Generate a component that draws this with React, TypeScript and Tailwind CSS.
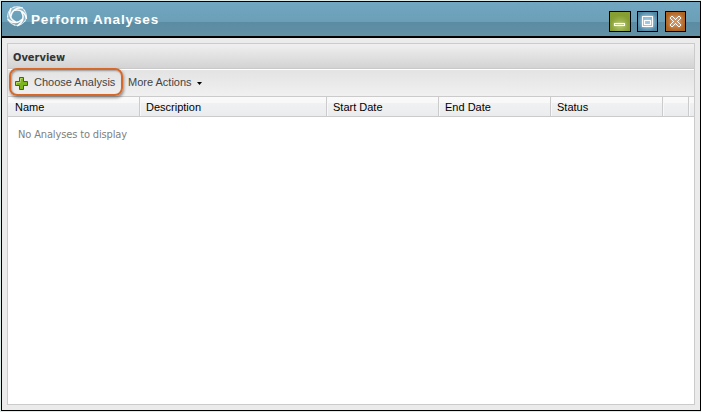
import type { ReactNode } from "react";

const columns = [
  { label: "Name", width: "w-[132px]", pad: "pl-[7px]" },
  { label: "Description", width: "w-[187px]", pad: "pl-[6px]" },
  { label: "Start Date", width: "w-[112px]", pad: "pl-[6px]" },
  { label: "End Date", width: "w-[112px]", pad: "pl-[6px]" },
  { label: "Status", width: "w-[112px]", pad: "pl-[6px]" },
  { label: "", width: "w-[26px]", pad: "" },
];

const closeGlyph = [
  ".##.....##.",
  "#..#...#..#",
  "#...#.#...#",
  ".#...#...#.",
  "..#.....#..",
  "...#...#...",
  "..#.....#..",
  ".#...#...#.",
  "#...#.#...#",
  "#..#...#..#",
  ".##.....##.",
];

function Logo() {
  return (
    <svg className="mt-[3px] h-[22px] w-[22px] shrink-0" viewBox="0 0 22 22" fill="none" stroke="#fff" strokeLinecap="round">
      <circle cx="11" cy="11" r="8" strokeWidth="4" opacity=".22" />
      {[10, 82, 154, 226, 298].map((a) => (
        <g key={a} transform={`rotate(${a} 11 11)`}>
          <path d="M5 12.5C4.6 7 8.6 2.4 14.6 2" strokeWidth="1.5" opacity=".95" />
          <path d="M2 13.2C1 8.4 3 4.6 6.6 2.6" strokeWidth=".9" opacity=".75" />
        </g>
      ))}
    </svg>
  );
}

function WindowButton({ color, label, children }: { color: string; label: string; children: ReactNode }) {
  return (
    <button aria-label={label} className={`h-[21px] border border-black ${color}`}>
      <svg
        className="block h-[19px] w-[19px] drop-shadow-[0_0_1px_rgba(255,255,255,0.5)]"
        viewBox="0 0 19 19"
        fill="none"
        stroke="#fff"
        shapeRendering="crispEdges"
      >
        {children}
      </svg>
    </button>
  );
}

export default function App() {
  return (
    <div className="h-[412px] w-[701px] overflow-hidden bg-[#dcebe8] pt-px pl-px font-['Liberation_Sans',Arial,sans-serif] text-[11px]">
      <div className="flex h-[410px] w-[700px] flex-col border border-black bg-[#ebebeb]">
        <header className="flex h-[36px] shrink-0 border-b-2 border-black bg-[linear-gradient(#72a7c1_0px,#6b9fb8_20px,#5b8ca3_20px,#6290a5_34px)]">
          <div className="flex pl-[4px]">
            <Logo />
            <h1 className="ml-[3px] pt-[9px] text-[13.5px] leading-[17px] font-bold tracking-[0.86px] whitespace-nowrap text-white">
              Perform Analyses
            </h1>
          </div>
          <div className="mt-[9px] mr-[14px] ml-auto flex">
            <WindowButton label="Minimize" color="mr-[6px] w-[22px] bg-[radial-gradient(circle_at_50%_70%,#b0c36a_0%,#879f32_60%)]">
              <path d="M4.5 11.5h10v2h-10z" />
            </WindowButton>
            <WindowButton label="Maximize" color="mr-[7px] w-[21px] bg-[radial-gradient(circle,#8fc0dc_20%,#4f86a2_80%)]">
              <path d="M4.5 4.5h10v10h-10zM6.5 8.5h6v4h-6z" />
            </WindowButton>
            <WindowButton label="Close" color="w-[21px] bg-[radial-gradient(circle,#ce8a51_20%,#ae6422_75%)]">
              {closeGlyph.flatMap((row, y) =>
                [...row].map((cell, x) =>
                  cell === "#" ? <rect key={`${x}-${y}`} x={x + 4} y={y + 4} width="1" height="1" fill="#fff" stroke="none" /> : null,
                ),
              )}
            </WindowButton>
          </div>
        </header>
        <main className="mt-[5px] ml-[5px] flex h-[362px] w-[688px] flex-col border border-[#cbcbcb] bg-white">
          <h2 className="h-[25px] shrink-0 border-b border-[#c9c9c9] bg-linear-to-b from-[#f0f0f0] to-[#d3d3d3] pl-[5px] font-['DejaVu_Sans_Condensed','DejaVu_Sans',sans-serif] text-[11px] leading-[27px] font-bold text-[#333]">
            Overview
          </h2>
          <div className="flex h-[28px] shrink-0 border-t border-b border-t-white border-b-[#cbcbcb] bg-linear-to-b from-[#e3e3e3] to-[#f0f0f0] text-[#444]">
            <button className="relative -mt-[2px] ml-px flex h-[28px] w-[114px] shrink-0 items-center rounded-[8px] border-2 border-[#d4692b] pl-[4px] whitespace-nowrap shadow-[1px_2px_3px_rgba(0,0,0,0.4),inset_1px_1px_2px_rgba(0,0,0,0.35)]">
              <svg className="mt-px mr-[5px] h-[14px] w-[14px] shrink-0" viewBox="0 0 14 14">
                <path d="M4.5 1.5h4v4h4v4h-4v4h-4v-4h-4v-4h4z" fill="#7db51f" stroke="#3d6715" />
                <path d="M5.5 5.5v-3h2M1.5 8.5v-2h4" fill="none" stroke="#b6d96c" />
              </svg>
              <span>Choose Analysis</span>
            </button>
            <button className="ml-[5px] flex h-[25px] items-center whitespace-nowrap">
              More Actions
              <svg className="mt-[2px] ml-[5px] h-[3px] w-[5px]" viewBox="0 0 5 3">
                <path d="M0 0h5L2.5 3z" fill="#000" />
              </svg>
            </button>
          </div>
          <div className="flex h-[20px] shrink-0 border-b border-[#cbcbcb] bg-[linear-gradient(#fafafa_0px,#f8f8f8_6px,#eff1f3_6px,#ebecee_19px)] leading-[20px] text-black">
            {columns.map((c, i) => (
              <div key={i} className={`${c.width} ${c.pad} shrink-0 border-r border-[#cbcbcb] shadow-[1px_0_0_#f8f8f8]`}>
                {c.label}
              </div>
            ))}
          </div>
          <p className="pt-[10px] pl-[10px] font-['DejaVu_Sans_Condensed','DejaVu_Sans',sans-serif] text-[11px] leading-[16px] tracking-[-0.14px] text-[#808080]">
            No Analyses to display
          </p>
        </main>
      </div>
    </div>
  );
}
